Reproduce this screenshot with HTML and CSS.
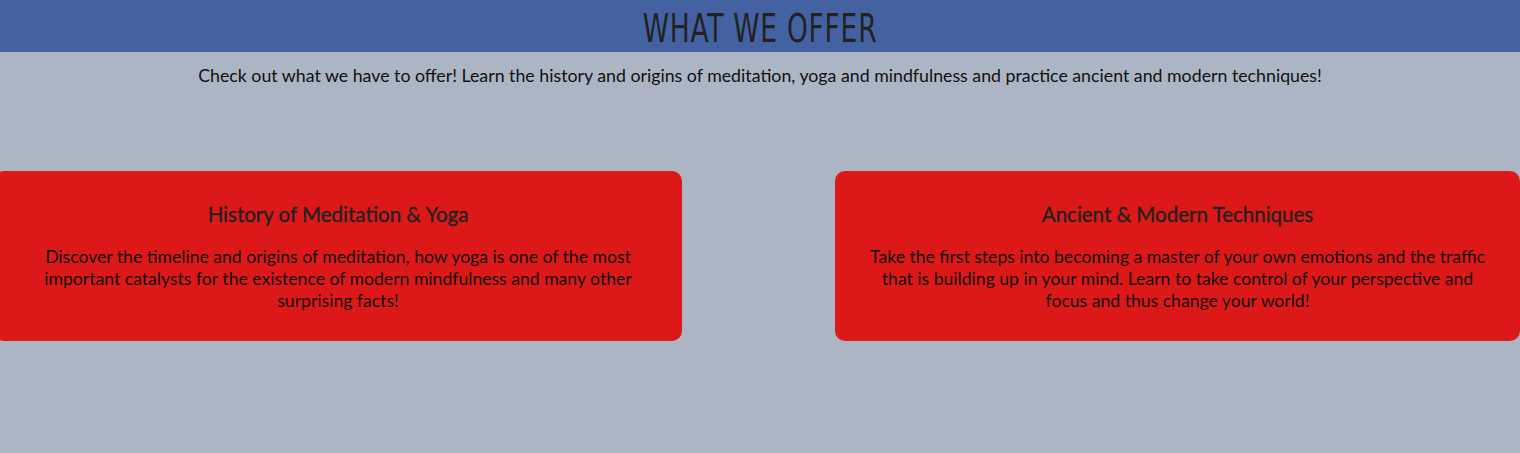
FILE: index.html
```html
<!DOCTYPE html>
<html lang="en">
<head>
<meta charset="utf-8">
<title>What We Offer</title>
<link rel="stylesheet" href="styles.css">
</head>
<body>
<header class="banner">
  <h1 class="banner-title">WHAT WE OFFER</h1>
</header>
<p class="intro">Check out what we have to offer! Learn the history and origins of meditation, yoga and mindfulness and practice ancient and modern techniques!</p>
<section class="cards">
  <article class="card card-left">
    <h2 class="card-title">History of Meditation &amp; Yoga</h2>
    <p class="card-text">Discover the timeline and origins of meditation, how yoga is one of the most important catalysts for the existence of modern mindfulness and many other surprising facts!</p>
  </article>
  <article class="card card-right">
    <h2 class="card-title">Ancient &amp; Modern Techniques</h2>
    <p class="card-text">Take the first steps into becoming a master of your own emotions and the traffic that is building up in your mind. Learn to take control of your perspective and focus and thus change your world!</p>
  </article>
</section>
</body>
</html>
```
FILE: styles.css
```css
html, body {
  margin: 0;
  padding: 0;
}
body {
  background: #abb5c4;
  font-family: Lato, "Noto Sans", sans-serif;
  color: #111;
  height: 453px;
  overflow: hidden;
}
.banner {
  background: #4462a2;
  height: 52px;
  box-sizing: border-box;
  padding-top: 6px;
  display: flex;
  align-items: center;
  justify-content: center;
}
.banner-title {
  margin: 0;
  font-family: "DejaVu Sans Condensed", "DejaVu Sans", sans-serif;
  font-weight: normal;
  font-size: 39px;
  letter-spacing: 1px;
  color: #222;
  transform: scaleX(0.756);
  line-height: 46px;
}
.intro {
  margin: 12px 0 0;
  text-align: center;
  font-size: 17.75px;
  line-height: 22px;
}
.cards {
  display: flex;
  justify-content: space-between;
  margin: 85px 0 0 -6px;
}
.card {
  background: #dd1818;
  border-radius: 10px;
  height: 170px;
  box-sizing: border-box;
  padding: 30px 28px 0;
  text-align: center;
}
.card-left { width: 688px; }
.card-right { width: 685px; }
.card-title {
  margin: 0;
  font-size: 20.5px;
  font-weight: normal;
  color: #222;
  line-height: 26px;
  -webkit-text-stroke: 0.35px #222;
}
.card-text {
  margin: 19px 0 0;
  font-size: 17.6px;
  line-height: 22px;
}
```
